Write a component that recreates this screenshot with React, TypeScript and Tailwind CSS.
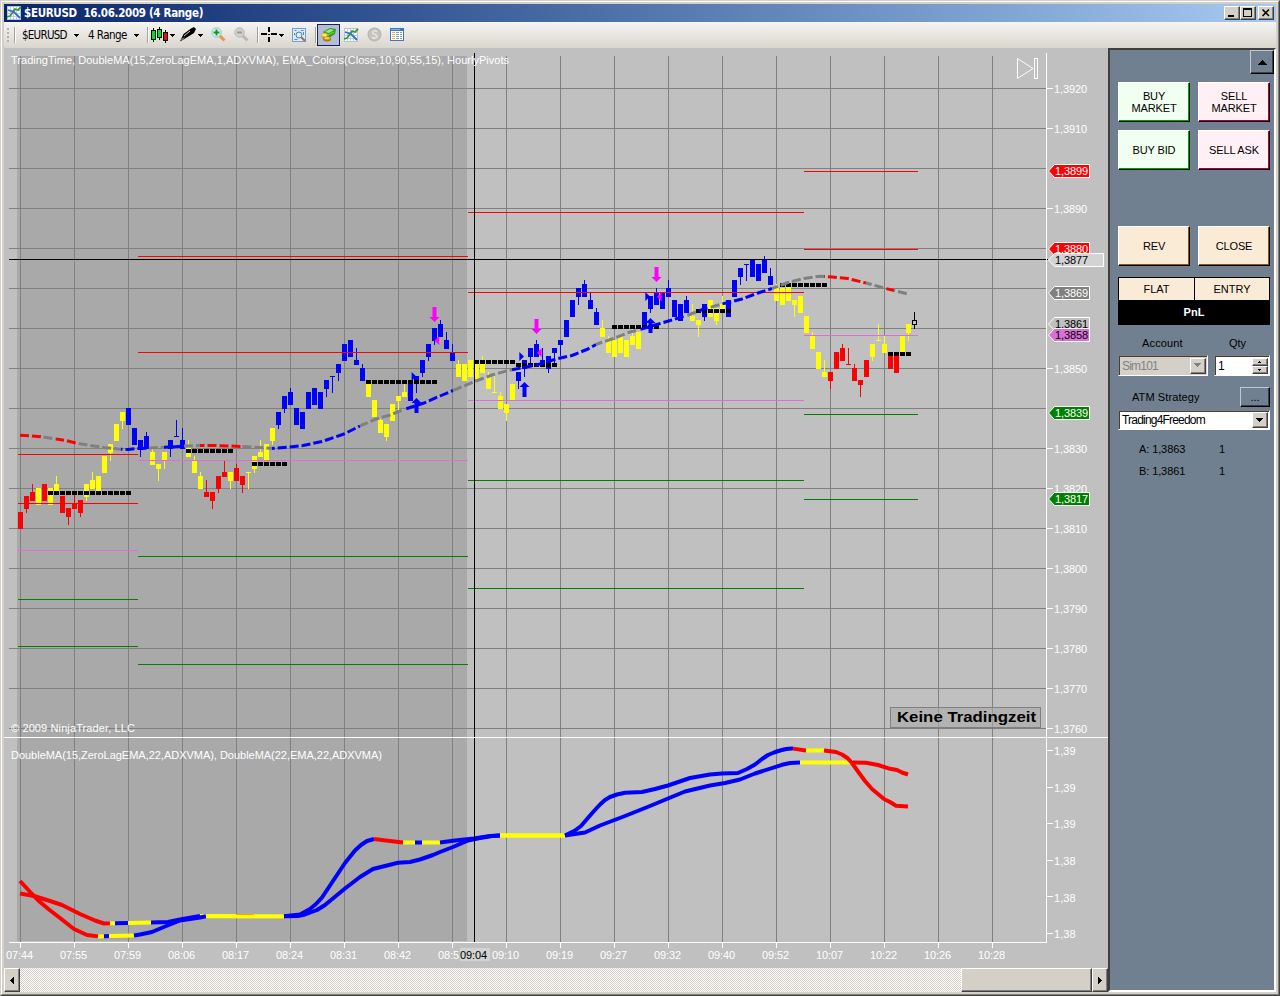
import React from "react";

type Point = [number, number];
type Span = [number, string];
// bar index, high, body top, body bottom, low, colour key
type Bar = [number, number, number, number, number, string];

const COLORS: Record<string, string> = {
  r: "#ff0000",
  y: "#ffff00",
  b: "#0000ff",
  g: "#808080",
};

const bars: Bar[] = [
  [0, 512, 512, 529, 529, "r"],
  [1, 496, 496, 509, 513, "r"],
  [2, 484, 492, 501, 501, "r"],
  [3, 488, 488, 505, 505, "y"],
  [4, 484, 484, 501, 501, "r"],
  [5, 488, 488, 505, 505, "y"],
  [6, 476, 484, 492, 492, "y"],
  [7, 496, 496, 513, 513, "r"],
  [8, 508, 508, 517, 525, "r"],
  [9, 495, 504, 509, 509, "r"],
  [10, 500, 500, 513, 517, "r"],
  [11, 484, 484, 497, 501, "y"],
  [12, 472, 480, 489, 489, "y"],
  [13, 476, 476, 491, 491, "y"],
  [14, 456, 456, 473, 473, "y"],
  [15, 444, 444, 453, 461, "y"],
  [16, 424, 424, 441, 441, "y"],
  [17, 412, 412, 421, 429, "y"],
  [18, 408, 408, 425, 425, "b"],
  [19, 428, 428, 445, 445, "b"],
  [20, 440, 440, 450, 457, "b"],
  [21, 432, 436, 449, 449, "b"],
  [22, 449, 452, 465, 465, "y"],
  [23, 464, 464, 469, 481, "y"],
  [24, 452, 452, 460, 469, "y"],
  [25, 440, 440, 449, 457, "b"],
  [26, 420, 436, 437, 437, "b"],
  [27, 428, 440, 449, 449, "b"],
  [28, 440, 448, 457, 457, "y"],
  [29, 456, 461, 473, 473, "y"],
  [30, 472, 476, 489, 489, "y"],
  [31, 480, 492, 497, 497, "r"],
  [32, 492, 492, 501, 509, "r"],
  [33, 476, 476, 489, 493, "r"],
  [34, 461, 472, 477, 477, "r"],
  [35, 472, 472, 481, 489, "y"],
  [36, 464, 468, 481, 481, "r"],
  [37, 476, 476, 485, 493, "r"],
  [38, 472, 472, 473, 489, "y"],
  [39, 456, 456, 469, 473, "y"],
  [40, 440, 452, 457, 457, "y"],
  [41, 444, 444, 460, 460, "y"],
  [42, 428, 428, 441, 445, "y"],
  [43, 412, 412, 425, 429, "b"],
  [44, 396, 396, 409, 413, "b"],
  [45, 388, 392, 405, 405, "b"],
  [46, 408, 408, 425, 425, "b"],
  [47, 412, 412, 429, 429, "b"],
  [48, 392, 392, 409, 409, "b"],
  [49, 388, 388, 405, 405, "b"],
  [50, 392, 392, 409, 409, "b"],
  [51, 380, 380, 389, 397, "b"],
  [52, 376, 376, 377, 393, "b"],
  [53, 364, 364, 373, 381, "b"],
  [54, 344, 344, 361, 361, "b"],
  [55, 340, 340, 357, 357, "b"],
  [56, 348, 360, 365, 365, "b"],
  [57, 364, 368, 381, 381, "b"],
  [58, 384, 384, 397, 397, "y"],
  [59, 400, 400, 417, 417, "y"],
  [60, 419, 420, 433, 433, "y"],
  [61, 424, 424, 437, 441, "y"],
  [62, 404, 404, 421, 421, "y"],
  [63, 396, 396, 401, 410, "y"],
  [64, 384, 392, 397, 397, "y"],
  [65, 383, 383, 401, 401, "b"],
  [66, 376, 376, 381, 393, "b"],
  [67, 360, 360, 373, 377, "b"],
  [68, 344, 344, 357, 361, "b"],
  [69, 328, 328, 341, 345, "b"],
  [70, 320, 324, 337, 337, "b"],
  [71, 332, 340, 349, 349, "b"],
  [72, 344, 352, 361, 361, "b"],
  [73, 360, 364, 377, 377, "y"],
  [74, 364, 364, 381, 381, "y"],
  [75, 360, 360, 377, 377, "y"],
  [76, 362, 362, 379, 379, "y"],
  [77, 356, 364, 373, 373, "y"],
  [78, 372, 376, 389, 389, "y"],
  [79, 376, 392, 393, 393, "y"],
  [80, 392, 396, 409, 409, "y"],
  [81, 404, 404, 413, 421, "y"],
  [82, 384, 384, 400, 400, "y"],
  [83, 372, 372, 381, 389, "b"],
  [84, 360, 360, 369, 377, "b"],
  [85, 348, 348, 357, 365, "b"],
  [86, 340, 344, 357, 357, "b"],
  [87, 348, 360, 365, 365, "b"],
  [88, 356, 356, 369, 373, "b"],
  [89, 348, 348, 353, 365, "b"],
  [90, 340, 340, 345, 356, "b"],
  [91, 320, 320, 337, 337, "b"],
  [92, 300, 300, 317, 317, "b"],
  [93, 288, 288, 297, 305, "b"],
  [94, 280, 284, 297, 297, "b"],
  [95, 293, 300, 309, 309, "b"],
  [96, 308, 312, 325, 325, "b"],
  [97, 320, 328, 337, 337, "y"],
  [98, 336, 340, 353, 353, "y"],
  [99, 340, 340, 357, 357, "y"],
  [100, 336, 336, 353, 353, "y"],
  [101, 340, 340, 357, 357, "y"],
  [102, 328, 336, 345, 345, "y"],
  [103, 332, 332, 349, 349, "y"],
  [104, 312, 312, 325, 325, "b"],
  [105, 296, 296, 309, 313, "b"],
  [106, 288, 292, 305, 305, "b"],
  [107, 293, 293, 309, 309, "b"],
  [108, 280, 288, 297, 297, "b"],
  [109, 300, 300, 317, 317, "b"],
  [110, 304, 304, 321, 321, "b"],
  [111, 296, 300, 313, 313, "b"],
  [112, 304, 316, 321, 321, "y"],
  [113, 320, 320, 325, 337, "y"],
  [114, 304, 304, 317, 321, "b"],
  [115, 300, 300, 317, 317, "y"],
  [116, 308, 308, 321, 325, "y"],
  [117, 296, 304, 310, 310, "y"],
  [118, 300, 300, 317, 317, "b"],
  [119, 280, 280, 297, 297, "b"],
  [120, 268, 268, 277, 285, "b"],
  [121, 264, 264, 265, 281, "b"],
  [122, 260, 260, 277, 277, "b"],
  [123, 264, 264, 281, 281, "b"],
  [124, 256, 260, 273, 273, "b"],
  [125, 268, 276, 285, 285, "b"],
  [126, 284, 288, 301, 301, "y"],
  [127, 288, 288, 305, 305, "y"],
  [128, 287, 287, 301, 301, "y"],
  [129, 300, 300, 305, 317, "y"],
  [130, 296, 296, 313, 313, "y"],
  [131, 316, 316, 333, 333, "y"],
  [132, 332, 336, 349, 349, "y"],
  [133, 352, 352, 369, 369, "y"],
  [134, 360, 372, 377, 377, "y"],
  [135, 372, 372, 381, 389, "r"],
  [136, 352, 352, 369, 369, "r"],
  [137, 344, 348, 361, 361, "r"],
  [138, 348, 364, 365, 365, "r"],
  [139, 364, 368, 381, 381, "r"],
  [140, 380, 380, 385, 397, "r"],
  [141, 360, 360, 377, 377, "r"],
  [142, 344, 344, 357, 361, "y"],
  [143, 324, 340, 341, 341, "y"],
  [144, 336, 344, 353, 353, "y"],
  [145, 355, 355, 369, 369, "r"],
  [146, 355, 355, 373, 373, "r"],
  [147, 336, 336, 352, 352, "y"],
  [148, 324, 324, 333, 341, "y"],
];

// first bar, last bar, y
const dots: [number, number, number][] = [
  [5, 18, 491],
  [28, 35, 449],
  [39, 44, 462],
  [58, 69, 380],
  [76, 82, 360],
  [83, 89, 363],
  [99, 106, 325],
  [113, 118, 309],
  [127, 134, 283],
  [145, 148, 352],
];

const pivots: { from: number; to: number; levels: number[] }[] = [
  { from: 18, to: 138, levels: [454, 503, 550, 599, 646] },
  { from: 138, to: 468, levels: [256, 352, 460, 556, 664] },
  { from: 468, to: 804, levels: [212, 292, 400, 480, 588] },
  { from: 804, to: 918, levels: [171, 249, 335, 414, 499] },
];
const pivotColors = ["#ff0000", "#ff0000", "#da70d6", "#008000", "#008000"];

const ema: Point[] = [
  [20, 435.3], [32, 436], [43, 437], [56, 439], [66, 440.5], [78, 443.5], [90, 445.5], [104, 447.5],
  [118, 449], [128, 449.5], [137, 448.5], [150, 448], [160, 447.5], [172, 447], [185, 446], [200, 445.5],
  [215, 445.5], [230, 446], [242, 446.5], [260, 447.5], [272, 448.5], [290, 447], [303, 445.5], [322, 441.5],
  [344, 434], [362, 425], [376, 419], [390, 415], [404, 409.5], [424, 403], [440, 396], [453, 390.5],
  [476, 381], [492, 375], [508, 370.5], [524, 367.5], [540, 364], [556, 359], [572, 355.5], [588, 349],
  [597, 344], [612, 339], [630, 332], [640, 329.5], [655, 325], [672, 320], [688, 315], [704, 309],
  [722, 304], [742, 299], [758, 293], [772, 288.5], [788, 282.5], [804, 278.5], [820, 276.2], [832, 277],
  [848, 278.5], [866, 283], [884, 288], [894, 290.5], [908, 294],
];
const emaSpans: Span[] = [
  [43, "r"], [56, "g"], [78, "r"], [121, "g"], [147, "b"], [164, "g"], [182, "b"], [200, "g"],
  [242, "r"], [272, "g"], [360, "b"], [404, "g"], [453, "b"], [512, "g"], [596, "b"], [638, "g"],
  [686, "b"], [696, "g"], [710, "b"], [722, "g"], [772, "b"], [824, "g"], [866, "r"], [884, "g"],
  [894, "r"], [908, "g"],
];

const fastMa: Point[] = [
  [20, 881], [33, 895], [40, 902], [49, 909.5], [60, 918], [74, 929], [87, 935], [99, 936.5],
  [109, 936], [134, 935.5], [140, 934.5], [152, 932], [165, 926.5], [180, 920.5], [200, 917.5], [206, 916.3],
  [284, 916.3], [300, 914.5], [310, 909], [316, 904], [322, 897.500], [333, 881], [345, 863], [355, 850.5],
  [361, 845], [367, 841], [374, 839],
  [390, 841], [403, 842.5], [440, 842.5], [455, 840.5], [474, 838.5], [490, 836], [500, 835.5], [565, 835.5],
  [575, 830.5], [581, 826], [587, 819], [594, 811], [600, 804.5], [605, 800], [610, 797], [617, 794.5], [625, 792.8],
  [642, 792], [655, 789], [668, 785.5], [690, 778], [710, 774.5], [722, 773.5], [738, 773], [747, 769], [755, 764.500],
  [762, 759], [768, 755], [774, 752.5], [780, 750.500], [786, 749], [792, 748.5],
  [806, 750.5], [824, 750.5], [836, 752], [842, 754.5], [848, 758.5], [852, 763], [858, 771.5], [865, 781],
  [872, 789], [884, 799], [890, 802], [896, 805.8], [908, 806.5],
];
const fastSpans: Span[] = [
  [98, "r"], [104, "y"], [109, "b"], [134, "y"], [206, "b"], [284, "y"], [374, "b"], [403, "r"],
  [415, "y"], [422, "b"], [440, "y"], [500, "b"], [565, "y"], [793, "b"], [806, "r"], [824, "y"], [908, "r"],
];

const slowMa: Point[] = [
  [20, 893.5], [34, 896], [50, 901], [62, 905], [80, 914], [95, 920.5], [104, 923.5], [128, 923],
  [151, 922.5], [168, 922], [180, 919.5], [200, 916], [284, 916.3], [298, 916], [305, 914.5], [317, 910],
  [325, 905], [345, 888.5], [360, 877], [373, 869], [385, 866], [398, 862.8], [410, 862], [420, 859.5],
  [433, 855], [440, 852], [453, 847], [468, 840.5], [480, 838], [492, 836], [500, 835.5], [565, 835.5],
  [585, 832.5], [600, 825.5], [625, 816], [650, 806], [668, 798.5], [685, 791.5], [710, 785.5], [725, 783],
  [740, 779.5], [755, 773.5], [782, 764.8], [790, 763], [800, 762.5], [853, 762.5], [866, 762.7], [878, 765],
  [890, 768.8], [897, 770], [902, 772.5], [908, 774.5],
];
const slowSpans: Span[] = [
  [110, "r"], [115, "y"], [128, "b"], [151, "y"], [200, "b"], [284, "y"], [500, "b"], [565, "y"],
  [800, "b"], [853, "y"], [908, "r"],
];

const times = [
  "07:44", "07:55", "07:59", "08:06", "08:17", "08:24", "08:31", "08:42", "08:5", "09:10",
  "09:19", "09:27", "09:32", "09:40", "09:52", "10:07", "10:22", "10:26", "10:28",
];

const priceRows = Array.from({ length: 17 }, (_, n) => ({ y: 88 + n * 40, label: `1,${3920 - n * 10}` }));
const hiddenPrices = ["1,3900", "1,3880", "1,3870", "1,3860", "1,3840"];

const tags = [
  { y: 171, label: "1,3899", fill: "#ff0000", ink: "#fff", right: 1089.5 },
  { y: 249, label: "1,3880", fill: "#ff0000", ink: "#fff", right: 1089.5 },
  { y: 260, label: "1,3877", fill: "#d3d3d3", ink: "#000", right: 1103.5 },
  { y: 293, label: "1,3869", fill: "#808080", ink: "#fff", right: 1089.5 },
  { y: 324, label: "1,3861", fill: "#c0c0c0", ink: "#000", right: 1089.5 },
  { y: 335, label: "1,3858", fill: "#da70d6", ink: "#000", right: 1089.5 },
  { y: 413, label: "1,3839", fill: "#008000", ink: "#fff", right: 1089.5 },
  { y: 499, label: "1,3817", fill: "#008000", ink: "#fff", right: 1089.5 },
];

const yAt = (points: Point[], x: number) => {
  for (let i = 1; i < points.length; i++) {
    const [x0, y0] = points[i - 1];
    const [x1, y1] = points[i];
    if (x <= x1) return y0 + ((y1 - y0) * (x - x0)) / (x1 - x0);
  }
  return points[points.length - 1][1];
};

interface ColoredLineProps {
  points: Point[];
  spans: Span[];
  width: number;
  dashed?: boolean;
}

const ColoredLine: React.FC<ColoredLineProps> = ({ points, spans, width, dashed }) => {
  const start = points[0][0];
  return (
    <g fill="none" strokeWidth={width} strokeLinejoin="round">
      {spans.map(([to, color], i) => {
        const from = i === 0 ? start : spans[i - 1][0];
        const inner = points.filter(([x]) => x > from && x < to);
        const all: Point[] = [[from, yAt(points, from)], ...inner, [to, yAt(points, to)]];
        return (
          <polyline
            key={to}
            points={all.map((p) => p.join(",")).join(" ")}
            stroke={COLORS[color]}
            strokeDasharray={dashed ? "9 3" : undefined}
            strokeDashoffset={dashed ? (from - start) * 1.025 : undefined}
          />
        );
      })}
    </g>
  );
};

const Signals = () => (
  <g>
    {[[434.5, 307], [536.5, 319], [656.5, 267]].map(([x, y]) => (
      <path key={x} fill="#ff00ff" d={`M${x - 2} ${y}h4v10h3l-5 5l-5 -5h3z`} />
    ))}
    {[[416.5, 398], [524.5, 382], [650.5, 318]].map(([x, y]) => (
      <path key={x} fill="#0000ff" d={`M${x} ${y}l5 5h-3v10h-4v-10h-3z`} />
    ))}
    {[[434.5, 340.5], [537, 352.8], [657, 296.8]].map(([x, y]) => (
      <path key={x} fill="#ff00ff" d={`M${x} ${y}l4.7 -4.5v9z`} />
    ))}
    {[[416.3, 376.5], [524, 356.5], [650, 296.5]].map(([x, y]) => (
      <path key={x} fill="#0000ff" d={`M${x} ${y}l-4.7 -4.5v9z`} />
    ))}
  </g>
);

const Chart = () => (
  <svg
    viewBox="4 48 1104 920"
    width="1104"
    height="920"
    className="block bg-[#c0c0c0] font-['Liberation_Sans',Arial,sans-serif] text-[11px]"
  >
    <g shapeRendering="crispEdges">
      <rect x="17" y="56" width="450" height="885" fill="#a9a9a9" />
      {priceRows.map(({ y }) => (
        <rect key={y} x="9" y={y} width="1038" height="1" fill="#808080" />
      ))}
      {times.map((t, i) => (
        <rect key={t} x={20 + i * 54} y="56" width="1" height="886" fill="#808080" />
      ))}

      {bars.map(([i, high, top, bottom, low, color]) => (
        <g key={i} fill={COLORS[color]}>
          <rect x={20 + i * 6} y={high} width="1" height={low - high} />
          <rect x={18 + i * 6} y={top} width="5" height={bottom - top} />
        </g>
      ))}
      <rect x="914" y="312" width="1" height="17" />
      <rect x="912.5" y="320.5" width="4" height="4" fill="#c0c0c0" stroke="#000" />

      {dots.map(([first, last, y]) =>
        Array.from({ length: last - first + 1 }, (_, n) => (
          <rect key={`${first}-${n}`} x={18 + (first + n) * 6} y={y} width="5" height="4" />
        ))
      )}
      {pivots.map(({ from, to, levels }) =>
        levels.map((y, n) => (
          <rect key={`${from}-${y}`} x={from} y={y} width={to - from} height="1" fill={pivotColors[n]} />
        ))
      )}
    </g>

    <ColoredLine points={ema} spans={emaSpans} width={3} dashed />
    <Signals />
    <ColoredLine points={slowMa} spans={slowSpans} width={4} />
    <ColoredLine points={fastMa} spans={fastSpans} width={4} />
    <rect x="236" y="914" width="18" height="1" fill="#ffa500" />

    {/* Axes and crosshair */}
    <g shapeRendering="crispEdges">
      <rect x="9" y="259" width="1039" height="1" />
      <rect x="474" y="53" width="1" height="889" />
      <g fill="#fff">
        <rect x="1046" y="53" width="1" height="890" />
        <rect x="4" y="737" width="1104" height="1" />
        <rect x="9" y="942" width="1038" height="1" />
        {times.map((t, i) => (
          <rect key={t} x={20 + i * 54} y="943" width="1" height="5" />
        ))}
        {priceRows
          .filter(({ label }) => !hiddenPrices.includes(label))
          .map(({ y }) => (
            <rect key={y} x="1047" y={y} width="6" height="1" />
          ))}
        {[750, 787, 823, 860, 896, 933].map((y) => (
          <rect key={y} x="1047" y={y} width="6" height="1" />
        ))}
      </g>
    </g>

    <g fill="#fff">
      <text x="11" y="64" textLength="498">
        TradingTime, DoubleMA(15,ZeroLagEMA,1,ADXVMA), EMA_Colors(Close,10,90,55,15), HourlyPivots
      </text>
      <text x="11" y="732" textLength="124">© 2009 NinjaTrader, LLC</text>
      <text x="11" y="759" textLength="371">DoubleMA(15,ZeroLagEMA,22,ADXVMA), DoubleMA(22,EMA,22,ADXVMA)</text>
      {priceRows
        .filter(({ label }) => !hiddenPrices.includes(label))
        .map(({ y, label }) => (
          <text key={label} x="1054" y={y + 5} textLength="33">{label}</text>
        ))}
      {[750, 787, 823, 860, 897, 933].map((y, i) => (
        <text key={y} x="1054" y={y + 5} textLength="21.5">{i < 3 ? "1,39" : "1,38"}</text>
      ))}
      {times.map((t, i) => (
        <text key={t} x={6 + i * 54} y="959" textLength={t.length === 5 ? 27 : 21}>{t}</text>
      ))}
    </g>

    {tags.map(({ y, label, fill, ink, right }) => (
      <g key={label}>
        <path d={`M1048.5 ${y}L1054.5 ${y - 6.5}H${right}V${y + 6.5}H1054.5Z`} fill={fill} stroke="#fff" />
        <text x="1055" y={y + 4} textLength="33" fill={ink}>{label}</text>
      </g>
    ))}

    <rect x="460" y="948" width="30" height="13" fill="#d3d3d3" />
    <text x="460" y="959" textLength="27">09:04</text>

    <g fill="none" stroke="#fff">
      <path d="M1017.5 58.5V78.5L1033 68.5Z" />
      <rect x="1034.5" y="58.5" width="3" height="20" />
    </g>

    <rect x="890.5" y="707.5" width="150" height="20" fill="#a9a9a9" fillOpacity="0.6" stroke="#808080" />
    <text x="897" y="722" textLength="139" lengthAdjust="spacingAndGlyphs" className="text-[15px] font-bold">
      Keine Tradingzeit
    </text>
  </svg>
);

const Caret = () => (
  <svg width="5" height="3" className="mt-px" shapeRendering="crispEdges">
    <path d="M0 0h5v1H4v1H3v1H2V2H1V1H0z" />
  </svg>
);

const Separator = () => <div className="h-4 w-px bg-[#a5a297] shadow-[1px_0_0_#fff]" />;

const ChartIcon = () => (
  <svg width="15" height="14" viewBox="0 0 15 14">
    <rect x=".5" y=".5" width="13" height="13" fill="#fff" stroke="#b4c0dc" />
    <path d="M3.5 1v12M6.5 1v12M9.5 1v12M1 4.5h12M1 7.5h12M1 10.5h12" stroke="#c3cbe0" />
    <path d="M0 11l3-1 3-4 2-3 3 1 3-3" fill="none" stroke="#2f9e2f" strokeWidth="1.8" />
    <path d="M1 4l3 1 3 1 3 3 3 3" fill="none" stroke="#2f6fd0" strokeWidth="1.8" />
  </svg>
);

const CandlesIcon = () => (
  <svg width="17" height="16" shapeRendering="crispEdges">
    <path d="M2 1h1v14H2zM8 0h1v13H8zM14 3h1v13h-1z" />
    <path d="M0 3h5v10H0zM6 2h5v9H6zM12 5h5v9h-5z" />
    <path d="M1 4h3v8H1zM7 3h3v7H7z" fill="#00e020" />
    <path d="M13 6h3v7h-3z" fill="#e01010" />
  </svg>
);

const PenIcon = () => (
  <svg width="17" height="15" viewBox="0 0 17 15">
    <path d="M0 14.5L3.5 7 11 1.5 14 0l2 2-2 4-8 5z" />
    <path d="M4 9l6-5M1.5 13L4 10.5" stroke="#c8c8c8" />
  </svg>
);

const Magnifier: React.FC<{ disabled?: boolean }> = ({ disabled }) => (
  <svg width="15" height="15" viewBox="0 0 15 15">
    <path d="M8.5 8.5l5 5" stroke={disabled ? "#b9b7b1" : "#f0924c"} strokeWidth="3" />
    <circle cx="5.5" cy="5.5" r="4.7" fill={disabled ? "#d2d0cb" : "#d9f2f5"} stroke={disabled ? "#b9b7b1" : "#8dc0d6"} />
    <path d={disabled ? "M3 5.5h5" : "M2.5 5.5h6M5.5 2.5v6"} stroke={disabled ? "#9c9a95" : "#12a012"} strokeWidth="2" />
  </svg>
);

const CrossIcon = () => (
  <svg width="16" height="15" shapeRendering="crispEdges">
    <path d="M0 6h6v2H0zM10 6h6v2h-6zM7 0h2v5H7zM7 10h2v5H7zM7 7h2v1H7z" />
  </svg>
);

const PreviewIcon = () => (
  <svg width="14" height="14" viewBox="0 0 14 14">
    <rect x=".5" y=".5" width="13" height="13" fill="#dfe9f7" stroke="#6f9fdc" />
    <path d="M2.5 2.5h2M9 2.5h2.5M2.5 5v2M2.5 11.5h3M11.5 4v3" stroke="#4c86d0" />
    <path d="M9 9l4 4" stroke="#b8683a" strokeWidth="2" />
    <circle cx="7" cy="7" r="3" fill="#d6f2fb" stroke="#4d7fae" />
  </svg>
);

const TraderIcon = () => (
  <svg width="15" height="14" viewBox="0 0 15 14">
    <path d="M2 4l7-4 6 1-1 5-6 4z" fill="#2f9e22" />
    <path d="M4 4l5-3 4 1-5 3z" fill="#9be87d" />
    <path d="M7 7l6-3" stroke="#7ed860" />
    <ellipse cx="4" cy="8" rx="3.5" ry="3" fill="#d3a514" />
    <ellipse cx="6" cy="11" rx="4" ry="2.5" fill="#a87c0a" />
    <ellipse cx="3.5" cy="7" rx="2.5" ry="1.5" fill="#ffe66a" />
    <ellipse cx="6" cy="10.3" rx="3" ry="1.3" fill="#f3cf3c" />
  </svg>
);

const DollarIcon = () => (
  <svg width="15" height="15" viewBox="0 0 15 15">
    <circle cx="7.5" cy="7.5" r="7" fill="#b9b8b4" />
    <circle cx="7.5" cy="7.5" r="5.5" fill="#c6c5c1" />
    <path d="M10 4.5C8.5 3.5 5.5 3.5 5.5 5.500S10 7.3 10 9.3 6.5 11.5 5 10.3" fill="none" stroke="#e6e5e2" strokeWidth="1.5" />
  </svg>
);

const TableIcon = () => (
  <svg width="14" height="13" viewBox="0 0 14 13" shapeRendering="crispEdges">
    <rect width="14" height="13" fill="#3f74c8" />
    <rect x="1" y="3" width="12" height="9" fill="#fff" />
    <rect x="1" y="1" width="9" height="1" fill="#83b0f0" />
    <path d="M2 4h3v1H2zM2 6h3v1H2zM2 8h3v1H2zM2 10h3v1H2z" fill="#e0b548" />
    <path d="M6 4h3v1H6zM10 4h2v1h-2zM6 6h3v1H6zM10 6h2v1h-2zM6 8h3v1H6zM10 8h2v1h-2zM6 10h3v1H6zM10 10h2v1h-2z" fill="#8a97ae" />
  </svg>
);

const Toolbar = () => (
  <div className="flex h-[26px] items-center rounded-b-sm bg-linear-to-b from-[#f6f5f3] to-[#d9d6cd] pb-px font-['DejaVu_Sans_Condensed','DejaVu_Sans',Tahoma,sans-serif] text-[11.5px] text-black">
    <div className="flex w-2.5 flex-col gap-0.5 pl-[3px]">
      {[0, 1, 2, 3].map((n) => (
        <i key={n} className="block size-0.5 bg-[#b5b2a8]" />
      ))}
    </div>
    <div className="w-2"><Separator /></div>
    <div className="w-[52px] pt-0.5 tracking-[-0.75px] whitespace-nowrap">$EURUSD</div>
    <div className="w-3.5"><Caret /></div>
    <div className="w-[46px] pt-0.5 tracking-[-0.55px] whitespace-nowrap">4 Range</div>
    <div className="w-[13px]"><Caret /></div>
    <div className="w-1"><Separator /></div>
    <div className="w-[19px]"><CandlesIcon /></div>
    <div className="w-2.5"><Caret /></div>
    <div className="w-[18px]"><PenIcon /></div>
    <div className="w-[13px]"><Caret /></div>
    <div className="w-[23px]"><Magnifier /></div>
    <div className="w-[23px]"><Magnifier disabled /></div>
    <div className="w-1"><Separator /></div>
    <div className="w-[18px]"><CrossIcon /></div>
    <div className="w-[13px]"><Caret /></div>
    <div className="w-[23px]"><PreviewIcon /></div>
    <div className="w-0.5"><Separator /></div>
    <div className="mr-1 flex h-[22px] w-[23px] items-center justify-center border border-[#0a246a] bg-[#b6bdd2]">
      <TraderIcon />
    </div>
    <div className="w-[23px]"><ChartIcon /></div>
    <div className="w-[23px]"><DollarIcon /></div>
    <TableIcon />
  </div>
);

const bevel = "border border-t-white border-l-white border-r-[#404040] border-b-[#404040] bg-[#d4d0c8] shadow-[inset_-1px_-1px_0_#808080]";

const TitleBar = () => (
  <div className="flex h-[18px] items-center bg-linear-to-r from-[#0a246a] to-[#a6caf0] pr-0.5 pl-[3px]">
    <ChartIcon />
    <h1 className="ml-0.5 grow pt-px font-['DejaVu_Sans_Condensed','DejaVu_Sans',Tahoma,sans-serif] text-[11.5px] font-bold tracking-[-0.32px] whitespace-pre text-white">
      $EURUSD  16.06.2009 (4 Range)
    </h1>
    <button className={`flex h-3.5 w-4 items-center justify-center ${bevel}`}>
      <svg width="12" height="10" shapeRendering="crispEdges"><path d="M2 7h6v2H2z" /></svg>
    </button>
    <button className={`flex h-3.5 w-4 items-center justify-center ${bevel}`}>
      <svg width="12" height="10" shapeRendering="crispEdges"><path fillRule="evenodd" d="M1 0h9v9H1zM2 2h7v6H2z" /></svg>
    </button>
    <button className={`ml-0.5 flex h-3.5 w-4 items-center justify-center ${bevel}`}>
      <svg width="12" height="10"><path d="M2.5 1.5l6.5 6.5M9 1.5L2.5 8" stroke="#000" strokeWidth="1.6" /></svg>
    </button>
  </div>
);

interface OrderButtonProps {
  label: string;
  tone: string;
}

const OrderButton: React.FC<OrderButtonProps> = ({ label, tone }) => (
  <button
    className={`h-10 w-[72px] border border-t-white border-l-white border-r-black border-b-black px-2 text-center leading-3 tracking-[-0.15px] ${tone}`}
  >
    {label}
  </button>
);

const green = "bg-[#f0fff0] shadow-[inset_-1px_-1px_0_#00a000]";
const pink = "bg-[#fff0f5] shadow-[inset_-1px_-1px_0_#a8003c]";
const cream = "bg-[#faebd7] shadow-[inset_-1px_-1px_0_#8a5410]";
const sunken = "border border-t-[#808080] border-l-[#808080] border-r-white border-b-white shadow-[inset_1px_1px_0_#404040]";

const DropButton: React.FC<{ disabled?: boolean }> = ({ disabled }) => (
  <span className={`flex h-4 w-4 items-center justify-center ${bevel}`}>
    <svg width="8" height="5" shapeRendering="crispEdges">
      <path d="M0 0h7v1H6v1H5v1H4v1H3V3H2V2H1V1H0z" fill={disabled ? "#808080" : "#000"} />
    </svg>
  </span>
);

const OrderPanel = () => (
  <aside className="h-[944px] w-[168px] border-t-2 border-r-2 border-b-2 border-l-2 border-t-[#404040] border-r-white border-b-white border-l-[#404040] bg-[#708090] font-['Liberation_Sans',Arial,sans-serif] text-[11px] text-black">
    <div className="flex justify-end">
      <button className="flex h-6 w-6 items-center justify-center border border-t-[#c0c8d0] border-l-[#c0c8d0] border-r-black border-b-black shadow-[inset_-1px_-1px_0_#384048]">
        <svg width="9" height="5" shapeRendering="crispEdges"><path d="M4 0h1v1h1v1h1v1h1v1h1v1H0V4h1V3h1V2h1V1h1z" /></svg>
      </button>
    </div>
    <div className="mt-2 ml-2 w-[152px]">
      <div className="flex justify-between">
        <OrderButton label="BUY MARKET" tone={green} />
        <OrderButton label="SELL MARKET" tone={pink} />
      </div>
      <div className="mt-2 flex justify-between whitespace-nowrap">
        <OrderButton label="BUY BID" tone={green} />
        <OrderButton label="SELL ASK" tone={pink} />
      </div>
      <div className="mt-14 flex justify-between">
        <OrderButton label="REV" tone={cream} />
        <OrderButton label="CLOSE" tone={cream} />
      </div>

      <div className="mt-[11px] border border-black">
        <div className="flex h-[22px] bg-[#faebd7] text-center leading-[22px]">
          <div className="w-[76px] border-r border-black">FLAT</div>
          <div className="grow">ENTRY</div>
        </div>
        <div className="h-6 bg-black text-center leading-6 font-bold text-white">PnL</div>
      </div>

      <div className="mt-[11px] flex h-[15px] leading-[14px]">
        <span className="w-[87px] pl-6 tracking-[0.15px]">Account</span>
        <span className="pl-6">Qty</span>
      </div>
      <div className="mt-1 flex justify-between">
        <div className={`flex h-[21px] w-[90px] items-center justify-between bg-[#d4d0c8] pr-px pl-[3px] text-[12px] tracking-[-0.8px] text-[#808080] ${sunken}`}>
          Sim101
          <DropButton disabled />
        </div>
        <div className={`flex h-[21px] w-14 items-center justify-between bg-white pr-px pl-[3px] text-[12px] ${sunken}`}>
          1
          <span className="flex flex-col">
            <i className={`flex h-2 w-4 items-center justify-center ${bevel}`}>
              <svg width="4" height="2" shapeRendering="crispEdges"><path d="M1 0h1v1h1v1H0V1h1z" /></svg>
            </i>
            <i className={`flex h-2 w-4 items-center justify-center ${bevel}`}>
              <svg width="4" height="2" shapeRendering="crispEdges"><path d="M0 0h3v1H2v1H1V1H0z" /></svg>
            </i>
          </span>
        </div>
      </div>

      <div className="mt-[11px] flex h-5 justify-between pl-3.5 leading-5">
        <span className="tracking-[0.1px]">ATM Strategy</span>
        <button className="w-[30px] border border-t-[#c0c8d0] border-l-[#c0c8d0] border-r-black border-b-black leading-4 shadow-[inset_-1px_-1px_0_#384048]">
          ...
        </button>
      </div>
      <div className={`mt-[3px] flex h-5 items-center justify-between bg-white pr-px pl-[3px] text-[12px] tracking-[-0.8px] ${sunken}`}>
        Trading4Freedom
        <DropButton />
      </div>

      <div className="mt-2 pl-[21px] leading-[22px]">
        <div className="flex"><span className="w-20 tracking-[-0.1px]">A: 1,3863</span>1</div>
        <div className="flex"><span className="w-20 tracking-[-0.1px]">B: 1,3861</span>1</div>
      </div>
    </div>
  </aside>
);

const ScrollBar = () => (
  <div className="flex h-6 justify-between bg-[conic-gradient(#fff_25%,#d4d0c8_0_50%,#fff_0_75%,#d4d0c8_0)] bg-[length:2px_2px]">
    <button className={`flex h-6 w-4 items-center justify-center ${bevel}`}>
      <svg width="5" height="7" shapeRendering="crispEdges"><path d="M4 0v7H3V6H2V5H1V4H0V3h1V2h1V1h1V0z" /></svg>
    </button>
    <div className="flex">
      <div className={`h-6 w-[131px] ${bevel}`} />
      <button className={`flex h-6 w-4 items-center justify-center ${bevel}`}>
        <svg width="5" height="7" shapeRendering="crispEdges"><path d="M0 0v7h1V6h1V5h1V4h1V3H3V2H2V1H1V0z" /></svg>
      </button>
    </div>
  </div>
);

const App = () => {
  return (
    <div className="h-[996px] w-[1280px] overflow-hidden border border-t-[#d4d0c8] border-l-[#d4d0c8] border-r-[#404040] border-b-[#404040] bg-[#d4d0c8]">
      <div className="h-full border border-t-white border-l-white border-r-[#808080] border-b-[#808080] p-0.5">
        <TitleBar />
        <Toolbar />
        <div className="flex">
          <main className="w-[1104px]">
            <Chart />
            <ScrollBar />
          </main>
          <OrderPanel />
        </div>
      </div>
    </div>
  );
};

export default App;
